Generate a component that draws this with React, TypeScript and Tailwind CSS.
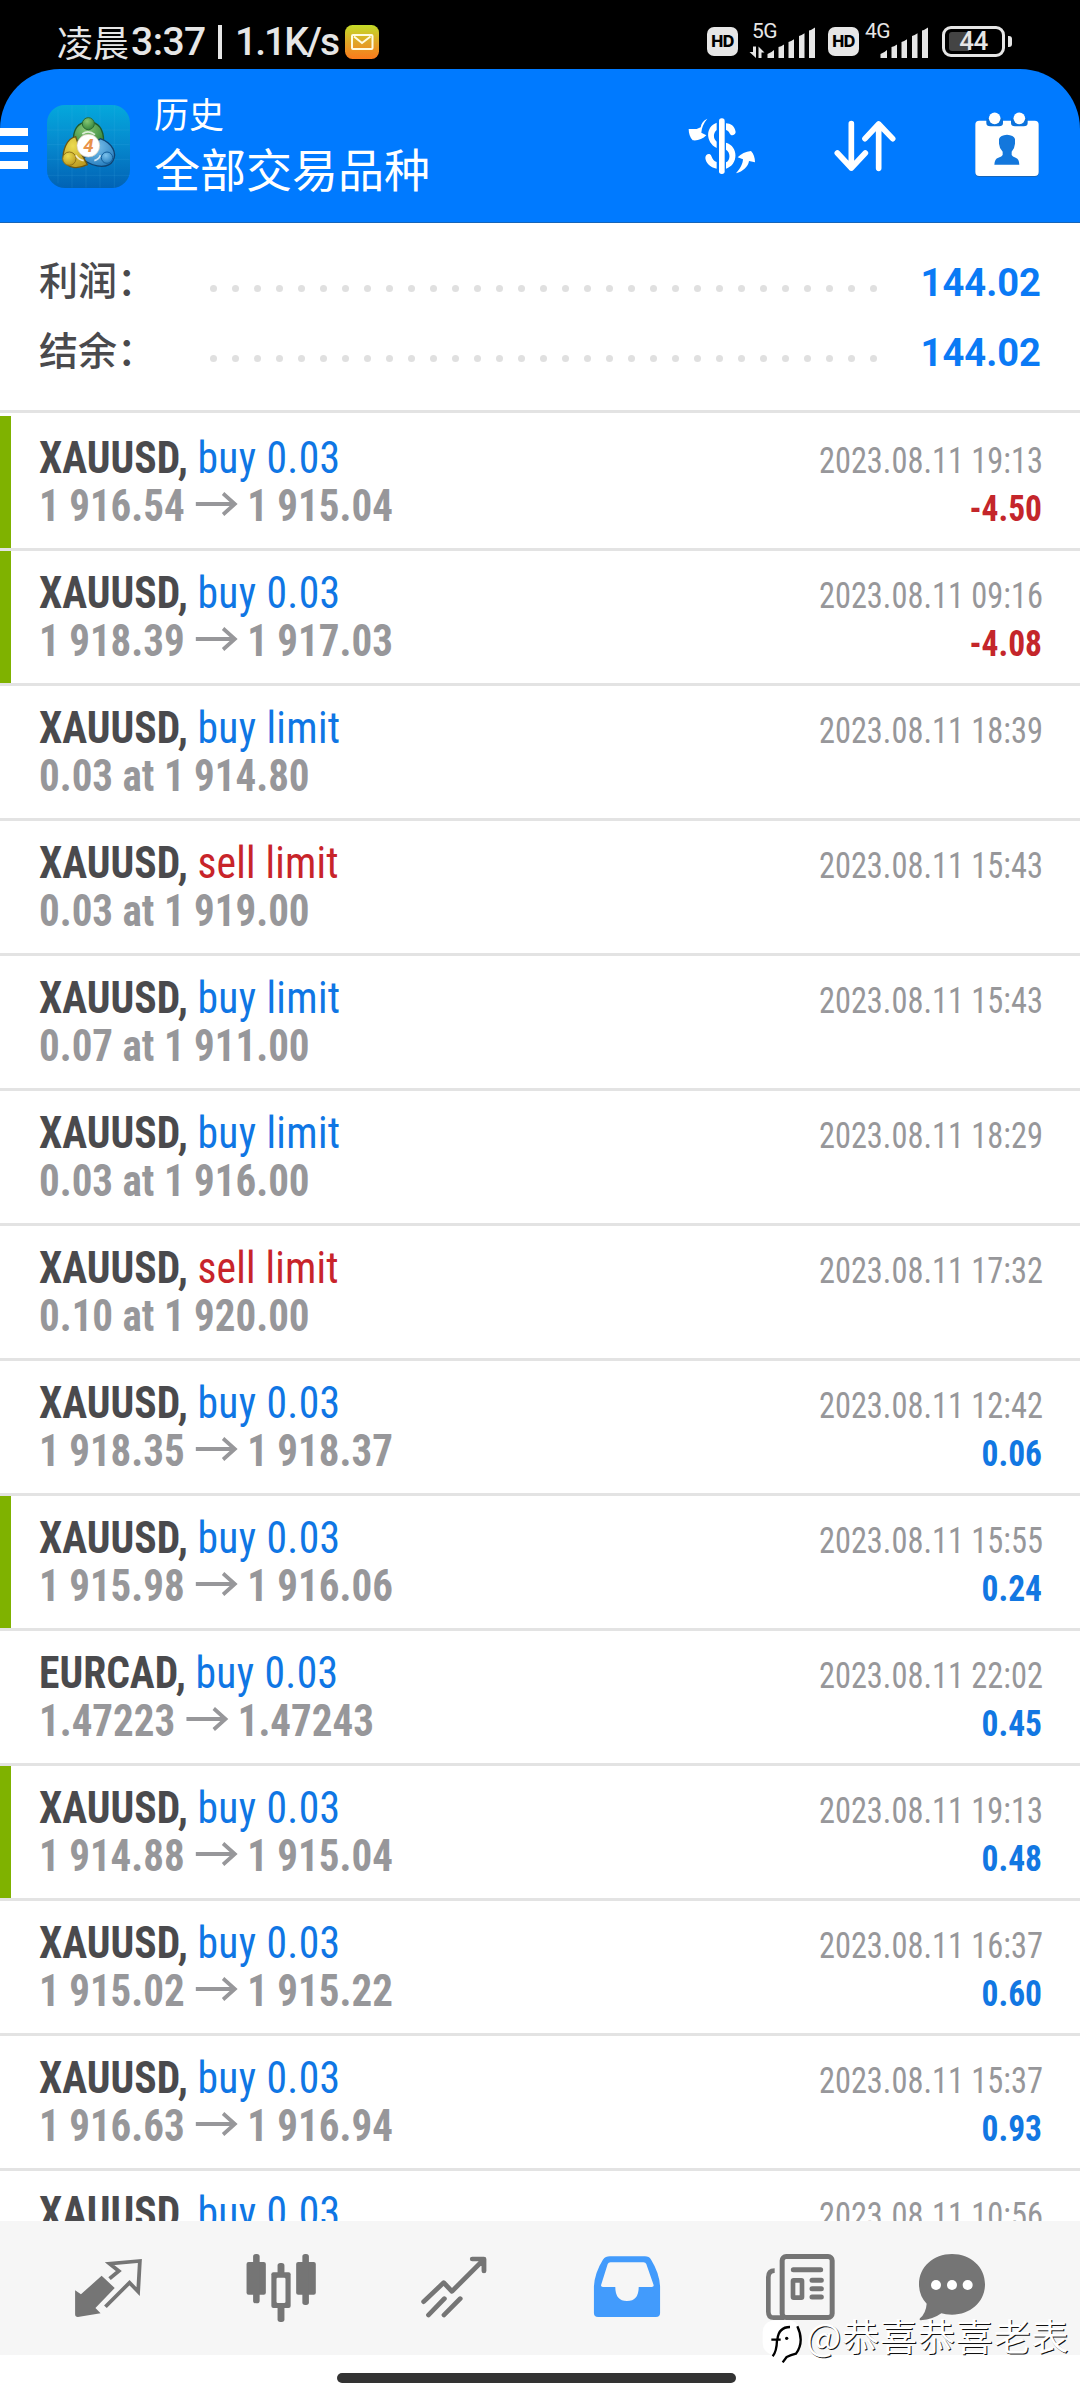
import type { ReactNode } from "react";

type Trade = {
  symbol: string;
  side: "buy" | "sell";
  action: string;
  from?: string;
  to?: string;
  order?: string;
  time: string;
  profit?: string;
  marked?: boolean;
};

const trades: Trade[] = [
  { symbol: "XAUUSD", side: "buy", action: "buy 0.03", from: "1 916.54", to: "1 915.04", time: "2023.08.11 19:13", profit: "-4.50", marked: true },
  { symbol: "XAUUSD", side: "buy", action: "buy 0.03", from: "1 918.39", to: "1 917.03", time: "2023.08.11 09:16", profit: "-4.08", marked: true },
  { symbol: "XAUUSD", side: "buy", action: "buy limit", order: "0.03 at 1 914.80", time: "2023.08.11 18:39" },
  { symbol: "XAUUSD", side: "sell", action: "sell limit", order: "0.03 at 1 919.00", time: "2023.08.11 15:43" },
  { symbol: "XAUUSD", side: "buy", action: "buy limit", order: "0.07 at 1 911.00", time: "2023.08.11 15:43" },
  { symbol: "XAUUSD", side: "buy", action: "buy limit", order: "0.03 at 1 916.00", time: "2023.08.11 18:29" },
  { symbol: "XAUUSD", side: "sell", action: "sell limit", order: "0.10 at 1 920.00", time: "2023.08.11 17:32" },
  { symbol: "XAUUSD", side: "buy", action: "buy 0.03", from: "1 918.35", to: "1 918.37", time: "2023.08.11 12:42", profit: "0.06" },
  { symbol: "XAUUSD", side: "buy", action: "buy 0.03", from: "1 915.98", to: "1 916.06", time: "2023.08.11 15:55", profit: "0.24", marked: true },
  { symbol: "EURCAD", side: "buy", action: "buy 0.03", from: "1.47223", to: "1.47243", time: "2023.08.11 22:02", profit: "0.45" },
  { symbol: "XAUUSD", side: "buy", action: "buy 0.03", from: "1 914.88", to: "1 915.04", time: "2023.08.11 19:13", profit: "0.48", marked: true },
  { symbol: "XAUUSD", side: "buy", action: "buy 0.03", from: "1 915.02", to: "1 915.22", time: "2023.08.11 16:37", profit: "0.60" },
  { symbol: "XAUUSD", side: "buy", action: "buy 0.03", from: "1 916.63", to: "1 916.94", time: "2023.08.11 15:37", profit: "0.93" },
  { symbol: "XAUUSD", side: "buy", action: "buy 0.03", time: "2023.08.11 10:56" },
];

function HdBadge() {
  return (
    <div className="flex h-[29px] w-[31px] items-center justify-center rounded-[7px] bg-[#e6e6e6] font-['Inter'] text-[16px] leading-none font-extrabold tracking-[-0.6px] text-black">
      HD
    </div>
  );
}

function Signal({ label, data }: { label: string; data?: boolean }) {
  return (
    <div className="relative h-[36px] w-[66px]">
      <span className="absolute top-0 left-[1px] font-['Roboto'] text-[21px] leading-[16px] tracking-[-0.5px] text-[#e6e6e6]">{label}</span>
      <svg className="absolute inset-0 overflow-visible" width="66" height="36" viewBox="0 0 66 36" fill="#e6e6e6">
        {data && <path d="M-1.500 29h3.500v-5.500h3V35zM7.500 35V23.500l6 6H10.500V35z" />}
        <path d="M16.500 35v-4q4-1.500 6.500-4V35zM27.500 35V24q2.500-.5 5.500-2.500V35zM37.500 35V19q2.500-.5 5.500-2.800V35zM48 35V13q2.500-.5 5.500-2.800V35zM58 35V7.500q2.500-.5 6-3V35z" />
      </svg>
    </div>
  );
}

function StatusBar() {
  return (
    <div className="flex h-[69px] items-start bg-black text-[#e6e6e6]">
      <div className="mt-[25px] ml-[57px] flex h-[34px] w-[330px] items-center font-['Roboto',sans-serif] text-[39px] leading-none">
        <span className="-mt-[3px] w-[74px] shrink-0 font-['Noto_Sans_CJK_SC',sans-serif] text-[36px]">凌晨</span>
        <span className="w-[86px] shrink-0 font-medium tracking-[-0.5px]">3:37</span>
        <span className="mr-[13px] ml-[1px] h-[34px] w-[4px] shrink-0 bg-[#e6e6e6]" />
        <span className="w-[110px] shrink-0 tracking-[-2px] font-medium whitespace-nowrap">1.1K/s</span>
        <svg width="34" height="34" viewBox="0 0 34 34" fill="none" className="shrink-0">
          <defs>
            <linearGradient id="mail" x1="0" y1="0" x2="0" y2="1">
              <stop offset="0" stopColor="#c4dc28" />
              <stop offset=".5" stopColor="#dfa626" />
              <stop offset="1" stopColor="#fb7a1c" />
            </linearGradient>
          </defs>
          <rect width="34" height="34" rx="7.500" fill="url(#mail)" />
          <rect x="7" y="10" width="20.500" height="14" rx="1" stroke="#fffbe0" strokeWidth="2" />
          <path d="M9 11.500l8 6.500 8.500-6.500" stroke="#fffbe0" strokeWidth="2" />
        </svg>
      </div>
      <div className="mt-[23px] ml-[320px] flex h-[36px] items-center">
        <HdBadge />
        <div className="ml-[13px]"><Signal label="5G" data /></div>
        <div className="ml-[11px]"><HdBadge /></div>
        <div className="ml-[5px]"><Signal label="4G" /></div>
        <div className="relative ml-[12px] flex h-[31px] w-[63px] items-center justify-center overflow-hidden rounded-[9px] border-[3px] border-[#e6e6e6]">
          <div className="absolute top-[3px] left-[4px] h-[19px] w-[20px] rounded-l-[3px] bg-[#444]" />
          <span className="relative font-['Roboto'] text-[26px] leading-none font-medium tracking-[-0.5px]">44</span>
        </div>
        <div className="ml-[3px] h-[11px] w-[4px] rounded-r-[3px] bg-[#e6e6e6]" />
      </div>
    </div>
  );
}

function AppLogo() {
  return (
    <svg width="83" height="83" viewBox="140 45 249 249" className="ml-[19px] shrink-0">
      <defs>
        <linearGradient id="tile" x1="0" y1="0" x2="0" y2="1">
          <stop offset="0" stopColor="#04a8dc" />
          <stop offset=".5" stopColor="#0687cd" />
          <stop offset="1" stopColor="#0162b4" />
        </linearGradient>
        <radialGradient id="green" cx=".4" cy=".3" r=".8">
          <stop offset="0" stopColor="#86c673" />
          <stop offset="1" stopColor="#2b7f37" />
        </radialGradient>
        <radialGradient id="gold" cx=".4" cy=".3" r=".8">
          <stop offset="0" stopColor="#ecdc50" />
          <stop offset="1" stopColor="#b8941c" />
        </radialGradient>
        <radialGradient id="sky" cx=".4" cy=".3" r=".8">
          <stop offset="0" stopColor="#7cc2ec" />
          <stop offset="1" stopColor="#1f78bb" />
        </radialGradient>
      </defs>
      <rect x="140" y="45" width="249" height="249" rx="54" fill="url(#tile)" />
      <path d="M173 60v220M215 46v247M257 46v247M299 46v247M342 46v247M141 120h247M141 164h247M141 208h247M141 256h247" stroke="#5bc4ee" strokeOpacity=".2" strokeWidth="2" />
      <path d="M219 160c-2-40 12-64 45-64s46 24 46 60l-46 14z" fill="url(#green)" stroke="#1f5a2c" strokeWidth="4" />
      <path d="M300 146c38 14 50 44 38 66s-50 24-88-2l14-36z" fill="url(#sky)" stroke="#0f4372" strokeWidth="4" />
      <path d="M226 140c-28 6-40 44-37 70 12 26 44 28 72 14l-16-30z" fill="url(#gold)" stroke="#6b5713" strokeWidth="4" />
      <circle cx="264" cy="101" r="18" fill="url(#green)" stroke="#2c6b35" strokeWidth="3" />
      <circle cx="207" cy="206" r="20" fill="url(#gold)" stroke="#8f7218" strokeWidth="3" />
      <circle cx="320" cy="203" r="17" fill="url(#sky)" stroke="#155f9b" strokeWidth="3" />
      <path d="M246 132q18-14 38 2M226 196q10 14 24 16M282 212q14-4 18-16" fill="none" stroke="#fff" strokeOpacity=".75" strokeWidth="5" />
      <circle cx="264" cy="167" r="34" fill="#fff" stroke="#d5c8b8" strokeWidth="2" />
      <text x="264" y="187" textAnchor="middle" fontFamily="Roboto" fontWeight="700" fontStyle="italic" fontSize="56" fill="#e9924a">4</text>
    </svg>
  );
}

function Header() {
  return (
    <div className="bg-black">
      <header className="flex h-[154px] items-start rounded-t-[60px] border-b border-[#1765b8] bg-[#007aff]">
        <div className="mt-[59px] flex w-[28px] flex-col gap-[9px]">
          <div className="h-[7.500px] bg-white" />
          <div className="h-[7.500px] bg-white" />
          <div className="h-[7.500px] bg-white" />
        </div>
        <div className="mt-[36px]"><AppLogo /></div>
        <div className="mt-[20px] ml-[24px] w-[400px] font-['Noto_Sans_CJK_SC',sans-serif] text-white">
          <div className="text-[35px] leading-[48px]">历史</div>
          <div className="text-[46px] leading-[61px]">全部交易品种</div>
        </div>
        <svg width="68" height="56" viewBox="54 84 204 168" className="mt-[49px] ml-[134px]" fill="#fff">
          <path d="M112 86c-12 5-18 14-20 26l-12 5-24 0c0 13 4 26 12 34 14 2 30-3 41-15l-15-8c1-15 7-29 18-42z" />
          <path d="M198 250c14-16 20-28 21-42l-16-6c10-10 24-18 40-19 8 8 12 20 12 34l-18-4c-2 16-18 32-39 37z" />
          <rect x="147" y="85" width="17" height="167" rx="8" />
          <path d="M140 98c-34 12-34 58 0 76v-19c-11-10-11-25 0-35zM168 100c14 0 26 8 29 26 0 8-12 14-17 6-3-7-7-11-12-12zM168 158c38 10 38 66 0 78v-19c14-6 14-30 0-38zM140 236c-20-4-32-16-34-32 0-12 14-16 18-6 4 10 8 16 16 18z" />
        </svg>
        <svg width="62" height="52" viewBox="492 90 186 156" className="mt-[51px] ml-[78px]" fill="none" stroke="#fff" strokeWidth="17" strokeLinecap="round" strokeLinejoin="round">
          <path d="M544 101V234M502 189l42 45 42-45M626 235V102M585 146l41-44 42 44" />
        </svg>
        <svg width="64" height="65" viewBox="914 67 192 195" className="mt-[43px] ml-[79px]">
          <rect x="915" y="97" width="190" height="165" rx="12" fill="#1765b8" />
          <rect x="915" y="93" width="190" height="166" rx="12" fill="#fff" />
          <path d="M948 86h50v14q0 10-12 10h-26q-12 0-12-10zM1022 86h50v14q0 10-12 10h-26q-12 0-12-10z" fill="#0b72dc" />
          <circle cx="973" cy="86" r="17.500" fill="#fff" />
          <circle cx="1047" cy="86" r="17.500" fill="#fff" />
          <path d="M986 148q4-12 24-13 20 1 24 13v14q-1 14-10 24v10q2 5 12 8 10 3 11 21h-75q1-18 12-21 11-3 13-8v-10q-10-10-11-24z" fill="#1377dc" />
        </svg>
      </header>
    </div>
  );
}

function SummaryLine({ label, value }: { label: string; value: string }) {
  return (
    <div className="flex h-[70px] items-center">
      <span className="-mt-[8px] w-[171px] font-['Noto_Sans_CJK_SC',sans-serif] text-[39px] leading-[70px] font-medium text-[#4a4a4d]">{label}</span>
      <div className="mt-[13px] flex w-[667px] justify-between">
        {Array.from({ length: 31 }, (_, i) => (
          <span key={i} className="size-[7px] rounded-full bg-[#e0e0e0]" />
        ))}
      </div>
      <span className="mt-[2px] flex-1 origin-right scale-x-[0.965] text-right font-['Roboto'] text-[39.500px] leading-[70px] font-bold text-[#0a7af5]">{value}</span>
    </div>
  );
}

function TradeRow({ trade }: { trade: Trade }) {
  return (
    <li className="flex h-[135px] shrink-0 border-b-[3px] border-[#e3e3e3] font-['Roboto_Condensed']">
      <div className={trade.marked ? "w-[11px] bg-[#7fb200]" : "w-[11px]"} />
      <div className="flex-1 pt-[18px] pr-[38px] pl-[28px] leading-[48px]">
        <div className="flex h-[48px] items-baseline justify-between">
          <p className="origin-left scale-x-[0.945] text-[44px]">
            <span className="font-bold text-[#4a4a4d]">{trade.symbol}, </span>
            <span className={trade.side === "buy" ? "tracking-[0.4px] text-[#0f76e4]" : "tracking-[0.2px] text-[#c8242a]"}>{trade.action}</span>
          </p>
          <span className="-mr-px origin-right scale-x-[0.9] text-[36px] text-[#97979a]">{trade.time}</span>
        </div>
        <div className="flex h-[48px] items-baseline justify-between">
          <p className="flex origin-left scale-x-[0.932] items-baseline text-[44px] font-bold whitespace-pre text-[#97979a]">
            {trade.order}
            {trade.from && (
              <>
                <span>{trade.from}</span>
                <svg width="46" height="24" viewBox="0 0 46 24" className="mr-[9px] ml-[12px] translate-y-[-5px]" fill="none" stroke="#97979a" strokeWidth="4">
                  <path d="M0 12h43M29.500 1.500L42 12 29.500 22.500" />
                </svg>
                <span>{trade.to}</span>
              </>
            )}
          </p>
          {trade.profit && (
            <span
              className={
                trade.profit.startsWith("-")
                  ? "origin-right scale-x-[0.93] text-[36px] font-bold text-[#c4262b]"
                  : "origin-right scale-x-[0.93] text-[36px] font-bold text-[#1277e2]"
              }
            >
              {trade.profit}
            </span>
          )}
        </div>
      </div>
    </li>
  );
}

function NavIcon({ viewBox, children }: { viewBox: string; children: ReactNode }) {
  return (
    <div className="flex w-[173px] shrink-0 justify-center">
      <svg width="72" height="68" viewBox={viewBox} preserveAspectRatio="none" className="mt-[33px]" fill="#757575">
        {children}
      </svg>
    </div>
  );
}

function BottomNav() {
  return (
    <nav className="flex h-[134px] shrink-0 bg-[#f6f6f6] pl-[21px]">
      <NavIcon viewBox="210 282 209 204">
        <path d="M219 391l17 12 60-56 38 37-56 60 15 16-66 11q-8 0-8-8z" />
        <path d="M319 356l27-23-27-22 88-8-5 92-25-27-70 72" fill="none" stroke="#757575" strokeWidth="11" />
      </NavIcon>
      <NavIcon viewBox="711.500 282 209 204">
        <rect x="716" y="306" width="56" height="98" rx="6" />
        <rect x="735" y="282" width="19" height="148" rx="8" />
        <rect x="860" y="306" width="57" height="98" rx="6" />
        <rect x="878" y="282" width="19" height="153" rx="8" />
        <rect x="806" y="309" width="20" height="177" rx="8" />
        <rect x="788" y="337" width="56" height="107" rx="6" />
        <rect x="803" y="353" width="26" height="76" rx="4" fill="#f6f6f6" />
      </NavIcon>
      <NavIcon viewBox="1214.500 282 209 204">
        <path d="M1231 425l58-57 24 26 90-93M1372 297h34v36M1245 465l46-49M1290 465l47-49" fill="none" stroke="#757575" strokeWidth="14" strokeLinecap="round" strokeLinejoin="round" />
      </NavIcon>
      <NavIcon viewBox="149.500 282 209 204">
        <path fillRule="evenodd" fill="#429bfc" d="M204 289h102q12 0 18 10 24 40 26 80v80q0 12-12 12H170q-12 0-12-12v-80q2-40 26-80 8-10 20-10zm2 18q-6 0-8 5l-19 62q-2 7 5 7h36q0 42 34 42t34-42h38q7 0 5-7l-21-62q-2-5-8-5z" />
      </NavIcon>
      <NavIcon viewBox="75 42 216 204">
        <g fill="none" stroke="#757575" strokeWidth="15">
          <rect x="129.500" y="49.500" width="150" height="183" rx="12" />
          <path d="M107 92q-19 0-19 20v103q0 18 16 18h32" strokeWidth="14" />
          <path d="M163 89h82M219 121h28M219 146h28M219 171h28" strokeLinecap="round" />
          <rect x="162" y="121" width="27" height="52" rx="2" strokeWidth="14" />
        </g>
      </NavIcon>
      <div className="-ml-[21px]">
        <NavIcon viewBox="531 42 216 204">
          <path d="M639 42c56 0 99 39 99 91s-43 91-99 91q-20 0-32-4-24 18-62 21-5-1-2-6 18-16 20-44-23-24-23-58c0-52 43-91 99-91z" />
          <circle cx="591" cy="135" r="15" fill="#fff" />
          <circle cx="639" cy="135" r="15" fill="#fff" />
          <circle cx="686" cy="135" r="15" fill="#fff" />
        </NavIcon>
      </div>
    </nav>
  );
}

function Watermark() {
  return (
    <div className="absolute top-[2317px] left-[762px] flex h-[46px] items-start">
      <svg width="44" height="46" viewBox="66 234 132 138" className="shrink-0">
        <rect x="68" y="244" width="112" height="104" rx="36" fill="#fff" />
        <path d="M98 352q12-14 13-48M94 302h28M112 302q4-38 38-38" fill="none" stroke="#000" strokeWidth="7" />
        <path d="M172 262q22 46-4 82-16 4-28 10l-12 16" fill="none" stroke="#000" strokeWidth="7" />
        <circle cx="140" cy="298" r="5" fill="#000" />
      </svg>
      <span className="-mt-[5px] font-['Noto_Sans_CJK_SC',sans-serif] text-[37.300px] leading-[46px] tracking-[0.600px] whitespace-nowrap text-white [text-shadow:1px_1px_0_#111]">
        @恭喜恭喜老表
      </span>
    </div>
  );
}

export default function App() {
  return (
    <div className="relative flex h-[2400px] w-[1080px] flex-col overflow-hidden bg-white">
      <StatusBar />
      <Header />
      <section className="flex h-[190px] shrink-0 flex-col border-b-[3px] border-[#e3e3e3] pt-[24px] pr-[39px] pl-[39px]">
        <SummaryLine label="利润：" value="144.02" />
        <SummaryLine label="结余：" value="144.02" />
      </section>
      <ul className="mt-[3px] flex h-[1805px] shrink-0 flex-col overflow-hidden">
        {trades.map((trade, i) => (
          <TradeRow key={i} trade={trade} />
        ))}
      </ul>
      <BottomNav />
      <div className="flex h-[45px] pt-[18px] pl-[337px]">
        <div className="h-[10px] w-[399px] rounded-full bg-[#333]" />
      </div>
      <Watermark />
    </div>
  );
}
